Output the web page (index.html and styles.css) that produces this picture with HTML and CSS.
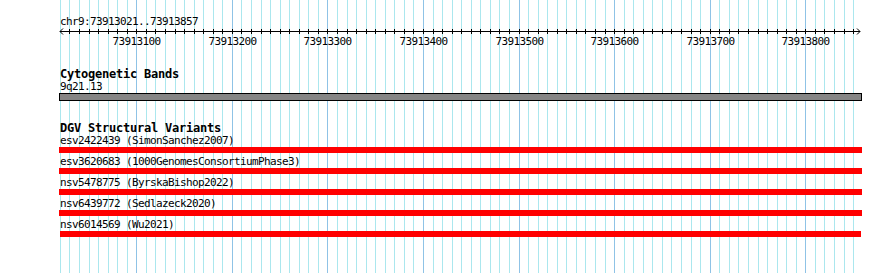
FILE: index.html
```html
<!DOCTYPE html>
<html lang="en">
<head>
    <meta charset="UTF-8">
    <meta name="viewport" content="width=device-width, initial-scale=1.0">
    <title>chr9:73913021..73913857</title>
    <link rel="stylesheet" href="styles.css">
</head>
<body>
    <div class="panel">
        <svg class="grid" id="grid" width="803" height="273"></svg>

        <div class="region-title">chr9:73913021..73913857</div>
        <svg class="ruler" id="ruler" width="803" height="20">
            <line x1="1" y1="3.5" x2="801" y2="3.5" />
            <polyline points="4,0.5 1,3.5 4,6.5" />
            <polyline points="798,0.5 801,3.5 798,6.5" />
        </svg>

        <div class="track track-bands">
            <div class="track-title">Cytogenetic Bands</div>
            <div class="feature-label">9q21.13</div>
            <div class="band"></div>
        </div>

        <div class="track track-dgv">
            <div class="track-title">DGV Structural Variants</div>
            <div class="variant">
                <div class="feature-label">esv2422439 (SimonSanchez2007)</div>
                <div class="variant-bar"></div>
            </div>
            <div class="variant">
                <div class="feature-label">esv3620683 (1000GenomesConsortiumPhase3)</div>
                <div class="variant-bar"></div>
            </div>
            <div class="variant">
                <div class="feature-label">nsv5478775 (ByrskaBishop2022)</div>
                <div class="variant-bar"></div>
            </div>
            <div class="variant">
                <div class="feature-label">nsv6439772 (Sedlazeck2020)</div>
                <div class="variant-bar"></div>
            </div>
            <div class="variant">
                <div class="feature-label">nsv6014569 (Wu2021)</div>
                <div class="variant-bar short"></div>
            </div>
        </div>
    </div>
    <script>
        const NS = 'http://www.w3.org/2000/svg';
        const grid = document.getElementById('grid');
        const ruler = document.getElementById('ruler');

        // 10bp per gridline, 73913020 sits on the first pixel column
        const START = 73913020;
        const STEP_PX = 9.557;
        const OFFSET = 0.85;
        const LINES = 84;

        function xFor(i) {
            return Math.round(OFFSET + i * STEP_PX) + 0.5;
        }

        function make(tag, attrs) {
            const el = document.createElementNS(NS, tag);
            for (const key in attrs) el.setAttribute(key, attrs[key]);
            return el;
        }

        for (let i = 0; i < LINES; i++) {
            const pos = START + i * 10;
            const x = xFor(i);
            const major = pos % 100 === 0;
            grid.appendChild(make('line', {
                x1: x, y1: 0, x2: x, y2: 273,
                class: major ? 'major' : 'minor'
            }));

            if (i > 0) {
                ruler.appendChild(make('line', { x1: x, y1: 1, x2: x, y2: 6 }));
            }
            if (major) {
                const label = make('text', { x: x, y: 17 });
                label.textContent = pos;
                ruler.appendChild(label);
            }
        }
    </script>
</body>
</html>
```

FILE: styles.css
```css
body {
    margin: 0;
    background-color: #fff;
    font-family: "DejaVu Sans Mono", monospace;
    font-size: 11px;
    letter-spacing: -0.62px;
    color: #000;
}

.panel {
    position: relative;
    width: 803px;
    height: 273px;
    margin-left: 59px;
    padding-top: 15px;
    box-sizing: border-box;
}

.grid {
    position: absolute;
    top: 0;
    left: 0;
    shape-rendering: crispEdges;
}

.grid .minor {
    stroke: #abe7ee;
    stroke-width: 1;
}

.grid .major {
    stroke: #8fc3e6;
    stroke-width: 1;
}

.region-title {
    position: relative;
    padding-left: 1px;
    line-height: 13px;
    height: 13px;
}

.ruler {
    position: relative;
    display: block;
    shape-rendering: crispEdges;
}

.ruler line,
.ruler polyline {
    stroke: #000;
    stroke-width: 1;
    fill: none;
}

.ruler polyline {
    shape-rendering: auto;
}

.ruler text {
    font-family: "DejaVu Sans Mono", monospace;
    font-size: 11px;
    letter-spacing: -0.62px;
    text-anchor: middle;
    fill: #000;
}

.track {
    position: relative;
}

.track-bands {
    margin-top: 20px;
}

.track-dgv {
    margin-top: 21px;
}

.track-title {
    padding-left: 1px;
    font-weight: bold;
    font-size: 12px;
    letter-spacing: -0.22px;
    line-height: 12px;
    height: 12px;
}

.feature-label {
    padding-left: 1px;
    line-height: 13px;
    height: 13px;
    white-space: nowrap;
}

.band {
    height: 8px;
    box-sizing: border-box;
    border: 1px solid #000;
    background-color: #858585;
}

.variant {
    margin-bottom: 2px;
}

.variant-bar {
    height: 6px;
    background-color: #ff0000;
}

.variant-bar.short {
    margin: 0 1px;
}
```
